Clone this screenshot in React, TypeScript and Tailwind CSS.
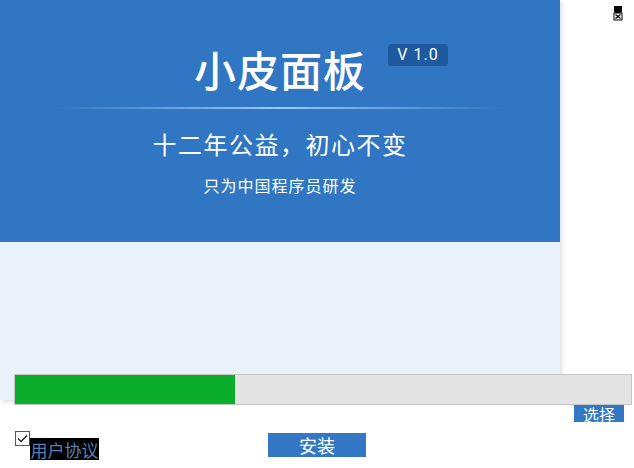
import React from "react";

const CloseGlyph = () => (
    <svg width="10" height="16" viewBox="0 0 10 16" className="absolute left-[613px] top-[5px]">
        <path d="M1 1h8v6l-2 1H3L1 7z" fill="#000" />
        <rect x="1" y="8" width="8" height="7" fill="#fff" stroke="#000" strokeWidth="1" />
        <path d="M2.5 9.5l5 4M7.5 9.5l-5 4" stroke="#000" strokeWidth="1.2" />
    </svg>
);

export default function App() {
    return (
        <div className="relative h-[468px] w-[634px] overflow-hidden bg-white font-['Noto_Sans_CJK_SC','Noto_Sans',sans-serif]">
            <CloseGlyph />
            <div className="w-[560px] shadow-[2px_2px_4px_rgba(0,0,0,0.12)]">
                <div className="relative flex h-[242px] flex-col items-center bg-[#3076c2] text-white">
                    <h1 className="mt-[39px] text-[42px] leading-[60px] font-medium tracking-[1px]">小皮面板</h1>
                    <span className="absolute left-[388px] top-[44px] flex h-[22px] w-[60px] items-center justify-center rounded-[3px] bg-[#1d5a9f] font-['Roboto',sans-serif] text-[16px] tracking-[1px]">
                        V 1.0
                    </span>
                    <div className="mt-[8px] h-[2px] w-[450px] bg-[linear-gradient(90deg,rgba(160,200,245,0),rgba(170,210,250,0.9)_50%,rgba(160,200,245,0))]" />
                    <p className="mt-[20px] text-[24px] leading-[30px] tracking-[1.5px]">十二年公益，初心不变</p>
                    <p className="mt-[16px] text-[16px] leading-[20px] tracking-[1px]">只为中国程序员研发</p>
                </div>
                <div className="h-[158px] bg-[#e9f1fb]" />
            </div>
            <div className="relative -mt-[26px] ml-[14px] flex h-[31px] w-[618px] border border-[#c4c4c4] bg-[#e4e4e4]">
                <div className="h-full w-[220px] bg-[#0aae2a]" />
            </div>
            <div className="ml-[574px] flex h-[17px] w-[50px] items-center justify-center bg-[#3377c5] text-[16px] leading-none text-white">
                选择
            </div>
            <div className="mt-[9px] flex items-start">
                <div className="ml-[15px] flex h-[15px] w-[15px] items-center justify-center border border-[#555] bg-white">
                    <svg width="11" height="9" viewBox="0 0 11 9">
                        <path d="M1 4.5l3 3 6-6" fill="none" stroke="#222" strokeWidth="1.3" />
                    </svg>
                </div>
                <span className="mt-[7px] flex h-[22px] w-[69px] items-center justify-center bg-black text-[17px] leading-none text-[#5580b6]">
                    用户协议
                </span>
                <button className="ml-[169px] mt-[2px] flex h-[24px] w-[98px] items-center justify-center bg-[#3377c5] text-[18px] leading-none text-white">
                    安装
                </button>
            </div>
        </div>
    );
}
